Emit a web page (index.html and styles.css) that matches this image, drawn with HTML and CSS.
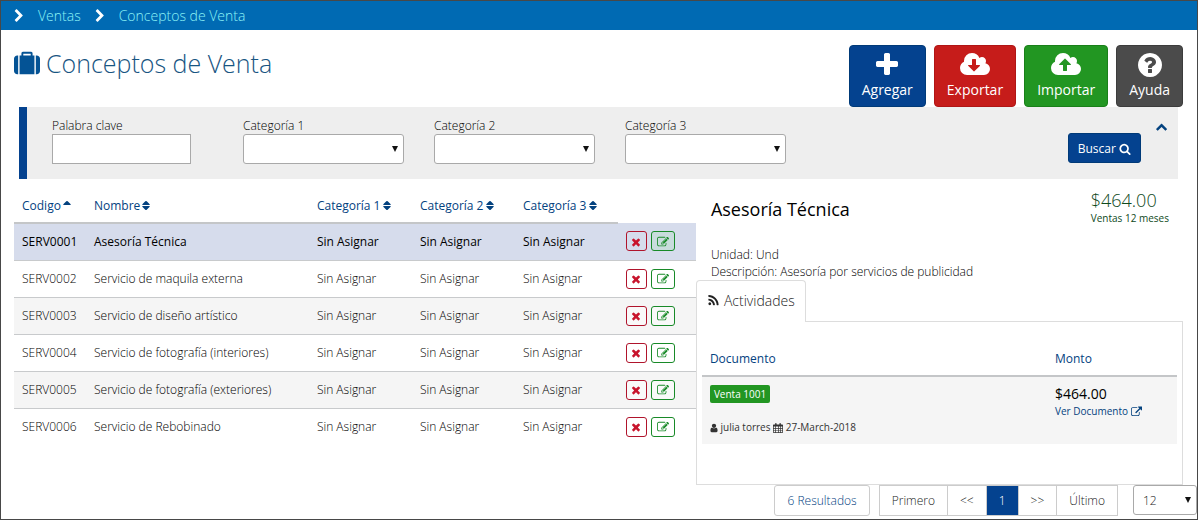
FILE: index.html
```html
<!DOCTYPE html>
<html lang="es">
<head>
    <meta charset="UTF-8">
    <meta name="viewport" content="width=device-width, initial-scale=1.0">
    <title>Conceptos de Venta</title>
    <link rel="stylesheet" href="styles.css">
</head>
<body>
    <!-- Icon set -->
    <svg class="sprite" aria-hidden="true">
        <symbol id="chevron" viewBox="0 0 1792 1792"><path d="M1363 877l-742 742q-19 19-45 19t-45-19l-166-166q-19-19-19-45t19-45l531-531-531-531q-19-19-19-45t19-45l166-166q19-19 45-19t45 19l742 742q19 19 19 45t-19 45z"/></symbol>
        <symbol id="suitcase" viewBox="0 0 1792 1792"><path d="M640 384h512v-128h-512v128zm-352 0v1280h-64q-92 0-158-66t-66-158v-832q0-92 66-158t158-66h64zm1120 0v1280h-1024v-1280h128v-160q0-40 28-68t68-28h576q40 0 68 28t28 68v160h128zm384 224v832q0 92-66 158t-158 66h-64v-1280h64q92 0 158 66t66 158z"/></symbol>
        <symbol id="plus" viewBox="0 0 1792 1792"><path d="M1600 736v192q0 40-28 68t-68 28h-416v416q0 40-28 68t-68 28h-192q-40 0-68-28t-28-68v-416h-416q-40 0-68-28t-28-68v-192q0-40 28-68t68-28h416v-416q0-40 28-68t68-28h192q40 0 68 28t28 68v416h416q40 0 68 28t28 68z"/></symbol>
        <symbol id="cloud-down" viewBox="0 0 1920 1792"><path d="M1280 928q0-14-9-23t-23-9h-224v-352q0-13-9.5-22.5t-22.5-9.5h-192q-13 0-22.5 9.5t-9.5 22.5v352h-224q-13 0-22.5 9.5t-9.5 22.5q0 14 9 23l352 352q9 9 23 9t23-9l351-351q10-12 10-24zm640 224q0 159-112.5 271.5t-271.5 112.5h-1088q-185 0-316.5-131.5t-131.5-316.5q0-130 70-240t188-165q-2-30-2-43 0-212 150-362t362-150q156 0 285.5 87t188.5 231q71-62 166-62 106 0 181 75t75 181q0 76-41 138 130 31 213.5 135.5t83.5 238.5z"/></symbol>
        <symbol id="cloud-up" viewBox="0 0 1920 1792"><path d="M1280 864q0-14-9-23l-352-352q-9-9-23-9t-23 9l-351 351q-10 12-10 24 0 14 9 23t23 9h224v352q0 13 9.5 22.5t22.5 9.5h192q13 0 22.5-9.5t9.5-22.5v-352h224q13 0 22.5-9.5t9.5-22.5zm640 288q0 159-112.5 271.5t-271.5 112.5h-1088q-185 0-316.5-131.5t-131.5-316.5q0-130 70-240t188-165q-2-30-2-43 0-212 150-362t362-150q156 0 285.5 87t188.5 231q71-62 166-62 106 0 181 75t75 181q0 76-41 138 130 31 213.5 135.5t83.5 238.5z"/></symbol>
        <symbol id="question" viewBox="0 0 1792 1792"><path d="M1024 1376v-192q0-14-9-23t-23-9h-192q-14 0-23 9t-9 23v192q0 14 9 23t23 9h192q14 0 23-9t9-23zm256-672q0-88-55.5-163t-138.5-116-170-41q-243 0-371 213-15 24 8 42l132 100q7 6 19 6 16 0 25-12 53-68 86-92 34-24 86-24 48 0 85.5 26t37.5 59q0 38-20 61t-68 45q-63 28-115.5 86.5t-52.5 125.5v36q0 14 9 23t23 9h192q14 0 23-9t9-23q0-19 21.5-49.5t54.5-49.5q32-18 49-28.5t46-35 44.5-48 28-60.5 12.5-81zm384 192q0 209-103 385.5t-279.5 279.5-385.5 103-385.5-103-279.5-279.5-103-385.5 103-385.5 279.5-279.5 385.5-103 385.5 103 279.5 279.5 103 385.5z"/></symbol>
        <symbol id="search" viewBox="0 0 1792 1792"><path d="M1216 832q0-185-131.5-316.5t-316.5-131.5-316.5 131.5-131.5 316.5 131.5 316.5 316.5 131.5 316.5-131.5 131.5-316.5zm512 832q0 52-38 90t-90 38q-54 0-90-38l-343-342q-179 124-399 124-143 0-273.5-55.5t-225-150-150-225-55.5-273.5 55.5-273.5 150-225 225-150 273.5-55.5 273.5 55.5 225 150 150 225 55.5 273.5q0 220-124 399l343 343q37 37 37 90z"/></symbol>
        <symbol id="times" viewBox="0 0 1792 1792"><path d="M1490 1322q0 40-28 68l-136 136q-28 28-68 28t-68-28l-294-294-294 294q-28 28-68 28t-68-28l-136-136q-28-28-28-68t28-68l294-294-294-294q-28-28-28-68t28-68l136-136q28-28 68-28t68 28l294 294 294-294q28-28 68-28t68 28l136 136q28 28 28 68t-28 68l-294 294 294 294q28 28 28 68z"/></symbol>
        <symbol id="edit" viewBox="0 0 1792 1792"><path d="M888 1184l116-116-152-152-116 116v56h96v96h56zm440-720q-16-16-33 1l-350 350q-17 17-1 33t33-1l350-350q17-17 1-33zm80 594v190q0 119-84.5 203.5t-203.5 84.5h-832q-119 0-203.5-84.5t-84.5-203.5v-832q0-119 84.5-203.5t203.5-84.5h832q63 0 117 25 15 7 18 23 3 17-9 29l-49 49q-14 14-32 8-23-6-45-6h-832q-66 0-113 47t-47 113v832q0 66 47 113t113 47h832q66 0 113-47t47-113v-126q0-13 9-22l64-64q15-15 35-7t20 29zm-96-738l288 288-672 672h-288v-288zm444 132l-92 92-288-288 92-92q28-28 68-28t68 28l152 152q28 28 28 68t-28 68z"/></symbol>
        <symbol id="rss" viewBox="0 0 1792 1792"><path d="M576 1344q0 80-56 136t-136 56-136-56-56-136 56-136 136-56 136 56 56 136zm512 123q2 28-17 48-18 21-47 21h-135q-25 0-43-16.5t-20-41.5q-22-229-184.5-391.5t-391.5-184.5q-25-2-41.5-20t-16.5-43v-135q0-29 21-47 17-17 43-17h5q160 13 306 80.5t259 181.5q114 113 181.5 259t80.5 306zm512 2q2 27-18 47-18 20-46 20h-143q-26 0-44.5-17.5t-19.5-42.5q-12-215-101-408.5t-231.5-336-336-231.5-408.5-102q-25-1-42.5-19.5t-17.5-43.5v-143q0-28 20-46 18-18 44-18h3q262 13 501.5 120t425.5 294q187 186 294 425.5t120 501.5z"/></symbol>
        <symbol id="external" viewBox="0 0 1792 1792"><path d="M1408 928v320q0 119-84.5 203.5t-203.5 84.5h-832q-119 0-203.5-84.5t-84.5-203.5v-832q0-119 84.5-203.5t203.5-84.5h704q14 0 23 9t9 23v64q0 14-9 23t-23 9h-704q-66 0-113 47t-47 113v832q0 66 47 113t113 47h832q66 0 113-47t47-113v-320q0-14 9-23t23-9h64q14 0 23 9t9 23zm384-864v512q0 26-19 45t-45 19-45-19l-176-176-652 652q-10 10-23 10t-23-10l-114-114q-10-10-10-23t10-23l652-652-176-176q-19-19-19-45t19-45 45-19h512q26 0 45 19t19 45z"/></symbol>
        <symbol id="user" viewBox="256 0 1280 1792"><path d="M1536 1399q0 109-62.5 187t-150.5 78h-854q-88 0-150.5-78t-62.5-187q0-85 8.5-160.5t31.5-152 58.5-131 94-89 134.5-34.5q131 128 313 128t313-128q76 0 134.5 34.5t94 89 58.5 131 31.5 152 8.5 160.5zm-256-887q0 159-112.5 271.5t-271.5 112.5-271.5-112.5-112.5-271.5 112.5-271.5 271.5-112.5 271.5 112.5 112.5 271.5z"/></symbol>
        <symbol id="calendar" viewBox="0 0 14 14"><path fill-rule="evenodd" d="M1 2h2V1q0-1 1-1t1 1v1h4V1q0-1 1-1t1 1v1h2q1 0 1 1v10q0 1-1 1H1q-1 0-1-1V3q0-1 1-1zM1 5v2h2V5zM4 5v2h3V5zM8 5v2h2V5zM11 5v2h2V5zM1 8v2h2V8zM4 8v2h3V8zM8 8v2h2V8zM11 8v2h2V8zM1 11v2h2v-2zM4 11v2h3v-2zM8 11v2h2v-2zM11 11v2h2v-2z"/></symbol>
        <symbol id="sort" viewBox="0 0 8 12"><path d="M4 1q.4 0 .7.3l3 3q.3.7-.4.7H.7Q0 5 .3 4.300l3-3Q3.600 1 4 1zM4 10q-.4 0-.7-.3l-3-3Q0 6 .7 6h6.600q.7 0 .4.7l-3 3q-.3.3-.7.3z"/></symbol>
        <symbol id="sort-up" viewBox="0 0 8 12"><path d="M4 1q.4 0 .7.3l3 3q.3.7-.4.7H.7Q0 5 .3 4.300l3-3Q3.600 1 4 1z"/></symbol>
    </svg>

    <nav class="breadcrumb">
        <svg class="icon"><use href="#chevron"/></svg>
        <a href="#">Ventas</a>
        <svg class="icon"><use href="#chevron"/></svg>
        <a href="#">Conceptos de Venta</a>
    </nav>

    <header class="page-header">
        <h1><svg class="icon"><use href="#suitcase"/></svg>Conceptos de Venta</h1>
        <div class="actions">
            <button class="action blue" type="button"><svg class="icon"><use href="#plus"/></svg>Agregar</button>
            <button class="action red" type="button"><svg class="icon wide"><use href="#cloud-down"/></svg>Exportar</button>
            <button class="action green" type="button"><svg class="icon wide"><use href="#cloud-up"/></svg>Importar</button>
            <button class="action gray" type="button"><svg class="icon"><use href="#question"/></svg>Ayuda</button>
        </div>
    </header>

    <!-- Search filters -->
    <form class="filters">
        <div class="field">
            <label for="keyword">Palabra clave</label>
            <input type="text" id="keyword">
        </div>
        <div class="field">
            <label for="cat1">Categoría 1</label>
            <div class="select"><select id="cat1"><option></option></select></div>
        </div>
        <div class="field">
            <label for="cat2">Categoría 2</label>
            <div class="select"><select id="cat2"><option></option></select></div>
        </div>
        <div class="field">
            <label for="cat3">Categoría 3</label>
            <div class="select"><select id="cat3"><option></option></select></div>
        </div>
        <button class="search" type="button">Buscar <svg class="icon"><use href="#search"/></svg></button>
        <button class="collapse" type="button" aria-label="Ocultar filtros"><svg class="icon"><use href="#chevron"/></svg></button>
    </form>

    <main class="content">
        <table class="items">
            <thead>
                <tr>
                    <th class="col-code"><a href="#">Codigo <svg class="icon"><use href="#sort-up"/></svg></a></th>
                    <th><a href="#">Nombre <svg class="icon"><use href="#sort"/></svg></a></th>
                    <th class="col-cat"><a href="#">Categoría 1 <svg class="icon"><use href="#sort"/></svg></a></th>
                    <th class="col-cat"><a href="#">Categoría 2 <svg class="icon"><use href="#sort"/></svg></a></th>
                    <th class="col-cat"><a href="#">Categoría 3 <svg class="icon"><use href="#sort"/></svg></a></th>
                    <td class="col-tools"></td>
                </tr>
            </thead>
            <tbody id="itemRows"></tbody>
        </table>

        <section class="detail">
            <div class="detail-head">
                <h2>Asesoría Técnica</h2>
                <div class="total">
                    <strong>$464.00</strong>
                    <span>Ventas 12 meses</span>
                </div>
            </div>
            <div class="detail-info">
                <p>Unidad: Und</p>
                <p>Descripción: Asesoría por servicios de publicidad</p>
            </div>
            <a class="tab" href="#activity"><svg class="icon"><use href="#rss"/></svg>Actividades</a>
            <div class="panel" id="activity">
                <table class="documents">
                    <thead>
                        <tr>
                            <th>Documento</th>
                            <th class="col-amount">Monto</th>
                        </tr>
                    </thead>
                    <tbody>
                        <tr>
                            <td>
                                <span class="badge">Venta 1001</span>
                                <p class="meta"><svg class="icon person"><use href="#user"/></svg> julia torres <svg class="icon"><use href="#calendar"/></svg> 27-March-2018</p>
                            </td>
                            <td>
                                <p class="amount">$464.00</p>
                                <a class="see" href="#">Ver Documento <svg class="icon"><use href="#external"/></svg></a>
                            </td>
                        </tr>
                    </tbody>
                </table>
            </div>
        </section>
    </main>

    <footer class="paging">
        <span class="results">6 Resultados</span>
        <div class="pages">
            <a href="#">Primero</a>
            <a href="#">&lt;&lt;</a>
            <a class="current" href="#">1</a>
            <a href="#">&gt;&gt;</a>
            <a href="#">Último</a>
        </div>
        <div class="select"><select aria-label="Resultados por página"><option>12</option></select></div>
    </footer>

    <script>
        const items = [
            ['SERV0001', 'Asesoría Técnica'],
            ['SERV0002', 'Servicio de maquila externa'],
            ['SERV0003', 'Servicio de diseño artístico'],
            ['SERV0004', 'Servicio de fotografía (interiores)'],
            ['SERV0005', 'Servicio de fotografía (exteriores)'],
            ['SERV0006', 'Servicio de Rebobinado']
        ];

        // The first item is the one open in the detail section
        document.getElementById('itemRows').innerHTML = items.map((item, i) => `
            <tr class="${i === 0 ? 'selected' : ''}">
                <td>${item[0]}</td>
                <td>${item[1]}</td>
                <td>Sin Asignar</td>
                <td>Sin Asignar</td>
                <td>Sin Asignar</td>
                <td>
                    <div class="tools">
                        <button class="tool delete" type="button" aria-label="Eliminar"><svg class="icon"><use href="#times"/></svg></button>
                        <button class="tool edit" type="button" aria-label="Editar"><svg class="icon"><use href="#edit"/></svg></button>
                    </div>
                </td>
            </tr>`).join('');
    </script>
</body>
</html>
```
FILE: styles.css
```css
* {
    margin: 0;
    padding: 0;
    box-sizing: border-box;
}

body {
    min-height: 100vh;
    border: 1px solid #484848;
    background: #fff;
    color: #000;
    font-family: 'Open Sans', sans-serif;
    font-size: 12px;
    font-weight: 300;
    line-height: 17px;
}

a {
    color: #04427f;
    text-decoration: none;
}

button, input, select {
    font: inherit;
}

.sprite {
    display: none;
}

.icon {
    width: 12px;
    height: 12px;
    fill: currentColor;
    vertical-align: middle;
}

/* Breadcrumb */
.breadcrumb {
    display: flex;
    align-items: center;
    gap: 12px;
    height: 29px;
    padding: 0 11px;
    background: #006ab3;
    color: #fff;
    font-size: 14px;
}

.breadcrumb .icon {
    width: 14px;
    height: 14px;
}

.breadcrumb a {
    color: #8df3f6;
}

/* Title and main actions */
.page-header {
    display: flex;
    justify-content: space-between;
    padding: 15px 14px 0 13px;
}

h1 {
    display: flex;
    align-items: center;
    gap: 6px;
    height: 36px;
    color: #185582;
    font-size: 25px;
    font-weight: 300;
}

h1 .icon {
    width: 26px;
    height: 26px;
    fill: #045395;
}

.actions {
    display: flex;
    gap: 8px;
}

.action {
    display: flex;
    flex-direction: column;
    align-items: center;
    justify-content: center;
    height: 62px;
    padding: 0 12px 1px;
    border: 1px solid #003a78;
    border-radius: 4px;
    color: #fff;
    font-size: 14px;
    font-weight: 400;
    line-height: 22px;
}

.action .icon {
    width: 28px;
    height: 28px;
}

.action .wide {
    width: 30px;
}

.blue {
    background: #04428f;
}

.red {
    background: #c61c1a;
    border-color: #b01515;
}

.green {
    background: #229622;
    border-color: #198019;
}

.gray {
    background: #4b4b4b;
    border-color: #3c3c3c;
}

/* Filters */
.filters {
    display: flex;
    align-items: flex-start;
    gap: 30px;
    min-height: 72px;
    margin: 0 19px 0 18px;
    padding: 10px 10px 0 25px;
    border-left: 8px solid #04428f;
    background: #eee;
}

.field {
    width: 161px;
}

.field label {
    display: block;
}

.field input,
.select select {
    width: 100%;
    height: 30px;
    border: 1px solid #a9a9a9;
    background: #fff;
    color: #222;
}

.field input {
    width: 139px;
    padding: 0 6px;
}

.select {
    position: relative;
}

.select select {
    appearance: none;
    display: block;
    padding: 0 9px;
    border-radius: 3px;
}

/* Drop-down arrow */
.select::after {
    content: "";
    position: absolute;
    top: 12px;
    right: 6px;
    border: 3px solid transparent;
    border-top: 6px solid #111;
    border-bottom: 0;
    pointer-events: none;
}

.search {
    height: 30px;
    margin: 16px 0 0 auto;
    padding: 0 9px;
    border: 1px solid #003a78;
    border-radius: 3px;
    background: #04428f;
    color: #fff;
    font-weight: 400;
}

.collapse {
    margin-left: -15px;
    border: 0;
    background: none;
    color: #04427f;
}

.collapse .icon {
    transform: rotate(-90deg);
}

/* Items table */
.content {
    display: grid;
    grid-template-columns: 7fr 5fr;
    align-items: start;
    padding: 8px 14px 0 13px;
}

table {
    width: 100%;
    border-collapse: collapse;
    table-layout: fixed;
}

th {
    color: #04427f;
    font-weight: 400;
    text-align: left;
}

.items th {
    height: 36px;
    padding: 2px 8px 0;
    border-bottom: 2px solid #c4c6c8;
}

.items th .icon {
    width: 8px;
    margin: -2px 0 0 -1px;
}

.col-code {
    width: 72px;
}

.col-cat {
    width: 103px;
}

.col-tools {
    width: 78px;
}

.items tbody td {
    height: 37px;
    padding: 0 8px;
    border-bottom: 1px solid #c8cacc;
}

.items tbody tr:last-child td {
    border-bottom: 0;
}

.items tbody tr:nth-child(odd) {
    background: #f5f5f5;
}

.items tbody tr.selected {
    background: #d6dcec;
    font-weight: 400;
}

.tools {
    display: flex;
    gap: 4px;
}

.tool {
    width: 21px;
    height: 20px;
    border: 1px solid #b0142c;
    border-radius: 3px;
    background: rgba(255, 255, 255, 0.4);
    color: #c8142c;
    line-height: 12px;
}

.selected .tool {
    background: none;
}

.tool.edit {
    width: 24px;
    border-color: #188a28;
    color: #188a28;
}

.selected .tool.edit {
    background: #c8dcdc;
}

/* Detail of the selected item */
.detail-head {
    display: flex;
    justify-content: space-between;
    min-height: 59px;
    padding: 3px 14px 0 15px;
}

h2 {
    padding-top: 7px;
    font-size: 18px;
    font-weight: 400;
    line-height: 24px;
}

.total {
    color: #0f4a1c;
    font-size: 10px;
}

.total strong {
    display: block;
    font-size: 18px;
    font-weight: 300;
    line-height: 20px;
}

.total span {
    font-weight: 400;
}

.detail-info {
    padding-left: 15px;
}

.tab {
    display: inline-flex;
    align-items: center;
    gap: 4px;
    height: 42px;
    margin-bottom: -1px;
    padding: 0 10px 2px;
    border: 1px solid #ddd;
    border-bottom: 0;
    border-radius: 4px 4px 0 0;
    background: #fff;
    color: #222;
    font-size: 14px;
    vertical-align: top;
}

.tab .icon {
    width: 13px;
    height: 13px;
}

.panel {
    padding: 19px 5px 40px;
    border: 1px solid #ddd;
}

.documents th {
    height: 35px;
    padding: 0 8px;
    border-bottom: 2px solid #c4c6c8;
}

.documents td {
    padding: 8px;
    background: #f5f5f5;
    vertical-align: top;
}

.col-amount {
    width: 130px;
}

.badge {
    display: inline-block;
    padding: 0 4px;
    border-radius: 2px;
    background: #229622;
    color: #fff;
    font-size: 10px;
    font-weight: 400;
    line-height: 18px;
}

.meta {
    margin-top: 16px;
    color: #333;
    font-size: 10px;
    font-weight: 400;
}

.meta .icon {
    width: 10px;
    height: 10px;
}

.meta .person {
    width: 8px;
}

.amount {
    font-size: 14px;
    font-weight: 400;
}

.see {
    font-size: 10px;
    font-weight: 400;
}

.see .icon {
    width: 11px;
}

/* Pagination */
.paging {
    display: flex;
    justify-content: flex-end;
    line-height: 29px;
}

.results {
    padding: 0 12px;
    border: 1px solid #ccc;
    border-radius: 3px;
    color: #04427f;
}

.pages {
    display: flex;
    margin: 0 15px 0 9px;
    border: 1px solid #ccc;
}

.pages a {
    padding: 0 12px;
    border-right: 1px solid #ccc;
    color: #222;
}

.pages a:last-child {
    border-right: 0;
}

.pages .current {
    background: #04428f;
    color: #fff;
}

.paging .select {
    width: 64px;
}
```
